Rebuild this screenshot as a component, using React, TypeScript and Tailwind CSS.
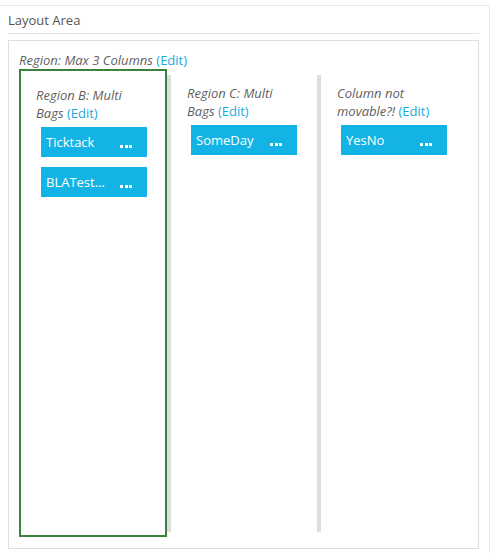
import React from "react";

type Column = {
  title: string;
  items: string[];
  active?: boolean;
};

const columns: Column[] = [
  { title: "Region B: Multi Bags", items: ["Ticktack", "BLATest..."], active: true },
  { title: "Region C: Multi Bags", items: ["SomeDay"] },
  { title: "Column not movable?!", items: ["YesNo"] },
];

function Dots() {
  return (
    <span className="flex items-end gap-[1.5px] self-end mb-[9px]">
      <span className="w-[3px] h-[3px] bg-white" />
      <span className="w-[3px] h-[3px] bg-white" />
      <span className="w-[3px] h-[3px] bg-white" />
    </span>
  );
}

function Item({ label }: { label: string }) {
  return (
    <div className="w-[106px] h-[30px] bg-[#13b4e5] text-white text-[13px] leading-[30px] flex justify-between pl-[5px] pr-[15px]">
      <span>{label}</span>
      <Dots />
    </div>
  );
}

function Title({ text }: { text: string }) {
  return (
    <div className="w-[108px] italic text-[13px] leading-[18px] text-[#5f5f5f]">
      {text} <span className="not-italic text-[#1ba9dd]">(Edit)</span>
    </div>
  );
}

export default function App() {
  return (
    <div className="min-h-screen bg-white pt-[5px] font-['Open_Sans',sans-serif]">
      <div className="w-[490px] border-t border-r border-[#e8e8e8] pr-[10px] pb-4">
        <div className="ml-2 pt-[4px] pb-[3px] border-b border-[#e3e3e3] text-[13px] leading-[20px] text-[#555]">
          Layout Area
        </div>
        <div className="ml-2 mt-[6px] border border-[#dedede] pl-[10px] pt-[10px] pb-[11px]">
          <div className="italic text-[13px] leading-[18px] text-[#5f5f5f]">
            Region: Max 3 Columns <span className="not-italic text-[#1ba9dd]">(Edit)</span>
          </div>
          <div className="flex">
            {columns.map((col) =>
              col.active ? (
                <div
                  key={col.title}
                  className="w-[148px] h-[468px] border-2 border-[#3b823b] pt-[15px] pl-[15px]"
                >
                  <Title text={col.title} />
                  <div className="mt-[5px] ml-[5px] flex flex-col gap-[10px]">
                    {col.items.map((it) => (
                      <Item key={it} label={it} />
                    ))}
                  </div>
                </div>
              ) : (
                <div
                  key={col.title}
                  className="w-[150px] mt-[6px] mb-[5px] border-l-4 border-[#dddddd] pl-4 pt-[9px]"
                >
                  <Title text={col.title} />
                  <div className="mt-[5px] ml-1 flex flex-col gap-[10px]">
                    {col.items.map((it) => (
                      <Item key={it} label={it} />
                    ))}
                  </div>
                </div>
              )
            )}
          </div>
        </div>
      </div>
    </div>
  );
}
